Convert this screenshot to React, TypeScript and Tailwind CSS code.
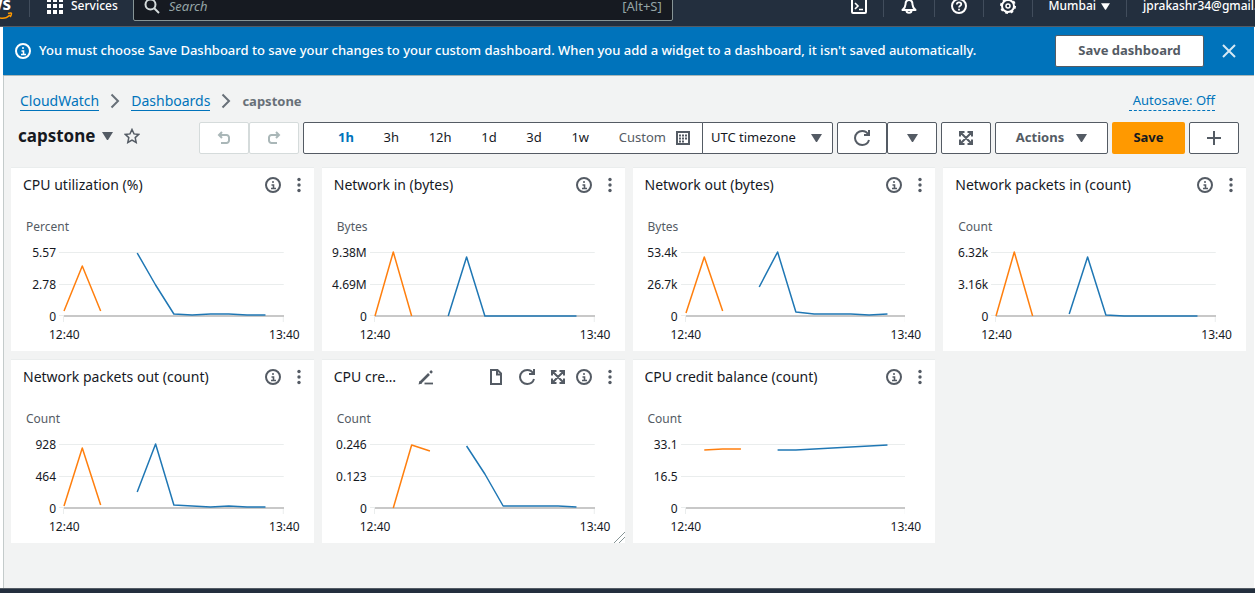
import type { ReactNode } from "react";

type Point = [step: number, y: number];

interface Widget {
  title: string;
  unit: string;
  ticks: [string, string, string];
  previous: Point[];
  current: Point[];
  active?: boolean;
}

const WIDGETS: Widget[] = [
  {
    title: "CPU utilization (%)",
    unit: "Percent",
    ticks: ["5.57", "2.78", "0"],
    previous: [[0, 61], [1, 16], [2, 61]],
    current: [[4, 3], [5, 35], [6, 64], [7, 65], [8, 64], [9, 64], [10, 65], [11, 65]],
  },
  {
    title: "Network in (bytes)",
    unit: "Bytes",
    ticks: ["9.38M", "4.69M", "0"],
    previous: [[0, 66], [1, 2], [2, 66]],
    current: [[4, 66], [5, 7], [6, 66], [11, 66]],
  },
  {
    title: "Network out (bytes)",
    unit: "Bytes",
    ticks: ["53.4k", "26.7k", "0"],
    previous: [[0, 63], [1, 7], [2, 61]],
    current: [[4, 37], [5, 2], [6, 62], [7, 64], [8, 64], [9, 64], [10, 65], [11, 64]],
  },
  {
    title: "Network packets in (count)",
    unit: "Count",
    ticks: ["6.32k", "3.16k", "0"],
    previous: [[0, 66], [1, 2], [2, 66]],
    current: [[4, 64], [5, 7], [6, 65], [7, 66], [11, 66]],
  },
  {
    title: "Network packets out (count)",
    unit: "Count",
    ticks: ["928", "464", "0"],
    previous: [[0, 64], [1, 6], [2, 63]],
    current: [[4, 50], [5, 2], [6, 63], [7, 64], [8, 65], [9, 64], [10, 65], [11, 65]],
  },
  {
    title: "CPU credit usage (count)",
    unit: "Count",
    ticks: ["0.246", "0.123", "0"],
    previous: [[1, 66], [2, 3], [3, 9]],
    current: [[5, 4], [6, 32], [7, 64], [10, 64], [11, 65]],
    active: true,
  },
  {
    title: "CPU credit balance (count)",
    unit: "Count",
    ticks: ["33.1", "16.5", "0"],
    previous: [[1, 8], [2, 7], [3, 7]],
    current: [[5, 8], [6, 8], [11, 3]],
  },
];

const RANGES = ["1h", "3h", "12h", "1d", "3d", "1w"];

function Icon({ children, className = "size-4" }: { children: ReactNode; className?: string }) {
  return (
    <svg
      viewBox="0 0 16 16"
      className={`${className} shrink-0`}
      fill="none"
      stroke="currentColor"
      strokeWidth="2"
      aria-hidden="true"
    >
      {children}
    </svg>
  );
}

const InfoIcon = () => (
  <Icon>
    <circle cx="8" cy="8" r="7" />
    <path d="M8.500 12V8H6.500M6 11.500h5M7 5h2" strokeWidth="1.600" />
  </Icon>
);

const RefreshIcon = () => (
  <Icon>
    <path d="M15 10c-.9 2.900-3.600 5-6.800 5C4.300 15 1 11.900 1 8s3.300-7 7.200-7c2.700 0 5 1.500 6.200 3.800" />
    <path d="M15 0v5h-5" />
  </Icon>
);

const ExpandIcon = () => (
  <Icon>
    <path d="M2 6.500V2h4.500M9.500 2H14v4.500M14 9.500V14H9.500M6.500 14H2V9.500M2 2l12 12M14 2L2 14" />
  </Icon>
);

const UndoIcon = ({ flip = false }: { flip?: boolean }) => (
  <Icon className={flip ? "size-4 -scale-x-100" : "size-4"}>
    <path d="M3 5h7.500A2.500 2.500 0 0 1 13 7.500v3a2.500 2.500 0 0 1-2.500 2.500H5" />
    <path d="M6 2L3 5l3 3" />
  </Icon>
);

const Caret = ({ className = "w-[11px] h-2" }: { className?: string }) => (
  <svg viewBox="0 0 11 8" className={`${className} shrink-0`} fill="currentColor" aria-hidden="true">
    <path d="M0 0h11L6 8H5z" />
  </svg>
);

const MoreIcon = () => (
  <svg viewBox="0 0 4 16" className="h-4 w-1" fill="currentColor" aria-hidden="true">
    <circle cx="2" cy="2.500" r="1.700" />
    <circle cx="2" cy="8" r="1.700" />
    <circle cx="2" cy="13.500" r="1.700" />
  </svg>
);

const FileIcon = () => (
  <Icon>
    <path d="M3 1h6.500L13 4.500V15H3z" />
    <path d="M9 1v4.500h4" />
  </Icon>
);

const PencilIcon = () => (
  <Icon>
    <path d="M2 14L11 5M12.200 3.800l1.800-1.800" strokeWidth="2.600" />
    <path d="M.5 15.500L1.500 12l2.500 2.500z" strokeWidth="0" fill="currentColor" />
    <path d="M6.500 14.500H15" strokeWidth="1.800" />
  </Icon>
);

const CalendarIcon = () => (
  <Icon>
    <path d="M2 2h12v12H2z" />
    <path d="M4 5.500h8M4 8.500h8M4 11.500h5" strokeDasharray="2 1" />
  </Icon>
);

function points(series: Point[]) {
  return series.map(([step, y]) => `${(5 + (step * 220) / 12).toFixed(1)},${y}`).join(" ");
}

function Chart({ widget }: { widget: Widget }) {
  return (
    <div className="pr-[30px]">
      <div className="flex">
        <div className="flex h-20 w-[45px] shrink-0 flex-col justify-between text-right leading-4">
          {widget.ticks.map((tick) => (
            <span key={tick}>{tick}</span>
          ))}
        </div>
        <svg
          viewBox="0 0 225 72"
          preserveAspectRatio="none"
          className="mt-[5px] ml-[3px] h-[72px] min-w-0 flex-1"
          fill="none"
          role="img"
          aria-label={widget.title}
        >
          <g stroke="#eaeded" strokeWidth="1" shapeRendering="crispEdges">
            <path d="M0 2.500H225M0 34.500H225M0 65.500H5M4.500 66V72M224.500 66V72" />
          </g>
          <path d="M5 66H225" stroke="#c8c8c8" strokeWidth="2" shapeRendering="crispEdges" />
          <g strokeWidth="1.500" strokeLinejoin="round">
            <polyline points={points(widget.previous)} stroke="#ff7f0e" />
            <polyline points={points(widget.current)} stroke="#1f77b4" />
          </g>
        </svg>
      </div>
      <div className="-mr-4 mt-[2px] ml-[38px] flex justify-between leading-4">
        <span>12:40</span>
        <span>13:40</span>
      </div>
    </div>
  );
}

function WidgetCard({ widget }: { widget: Widget }) {
  return (
    <section className="relative min-w-0 border-t border-[#eaeded] bg-white pb-2">
      <header className="flex h-[34px] items-center pr-[13px] pl-3 text-[#545b64]">
        <h2 className={`truncate text-[14px] leading-5 text-[#16191f] ${widget.active ? "w-16" : "flex-1"}`}>
          {widget.title}
        </h2>
        {widget.active && (
          <>
            <button type="button" aria-label="Rename widget" className="ml-5">
              <PencilIcon />
            </button>
            <div className="mr-[10px] ml-auto flex gap-[15px]">
              <button type="button" aria-label="View as logs">
                <FileIcon />
              </button>
              <button type="button" aria-label="Refresh widget">
                <RefreshIcon />
              </button>
              <button type="button" aria-label="Maximize widget">
                <ExpandIcon />
              </button>
            </div>
          </>
        )}
        <button type="button" aria-label="Widget info">
          <InfoIcon />
        </button>
        <button type="button" aria-label="Widget actions" className="ml-4">
          <MoreIcon />
        </button>
      </header>
      <div className="mt-[17px] text-[12px] text-[#16191f]">
        <p className="mb-[10px] pl-[15px] leading-4 text-[#545b64]">{widget.unit}</p>
        <Chart widget={widget} />
      </div>
      {widget.active && (
        <svg viewBox="0 0 12 12" className="absolute right-0 bottom-0 size-3" stroke="#879596" aria-hidden="true">
          <path d="M1 12L12 1M6 12L12 6" />
        </svg>
      )}
    </section>
  );
}

function TopNav() {
  return (
    <header className="flex h-[27px] flex-col justify-end overflow-hidden border-b border-[#545b64] bg-[#232f3e] text-[12px] leading-none font-medium text-white">
      <div className="flex h-10 shrink-0 items-center">
        <a href="#home" aria-label="AWS home" className="w-[29px] shrink-0 overflow-hidden">
          <span className="-ml-3 block h-6 text-[17px] leading-6 font-bold">ws</span>
          <svg viewBox="0 0 14 8" className="-mt-1 h-2 w-[14px]" fill="none" stroke="#f90" strokeWidth="1.500" aria-hidden="true">
            <path d="M0 6c4 1 7 0 10-3M8 1.500c2-.8 3.500-.6 3.500 0s-.3 2-1.300 3.500" />
          </svg>
        </a>
        <span className="h-[22px] w-px bg-[#414d5c]" />
        <button type="button" className="ml-[17px] flex items-center gap-2">
          <svg viewBox="0 0 16 16" className="size-4" fill="currentColor" aria-hidden="true">
            {[0, 6, 12].map((y) => [0, 6, 12].map((x) => <rect key={`${x}-${y}`} x={x} y={y} width="4" height="4" />))}
          </svg>
          Services
        </button>
        <label className="ml-[15px] flex h-[30px] w-[540px] items-center gap-[9px] rounded-xs border border-[#879596] bg-[#161a21] px-[10px] font-normal">
          <svg viewBox="0 0 16 16" className="size-4 shrink-0" fill="none" stroke="#d5dbdb" strokeWidth="2" aria-hidden="true">
            <circle cx="6.500" cy="6.500" r="5" />
            <path d="M10 10l5 5" />
          </svg>
          <input
            type="search"
            aria-label="Search"
            placeholder="Search"
            className="min-w-0 flex-1 bg-transparent text-[13px] outline-none placeholder:text-[#95a5a6] placeholder:italic"
          />
          <span className="text-[13px] leading-none text-[#95a5a6]">[Alt+S]</span>
        </label>
        <div className="ml-auto flex items-center">
          <button type="button" aria-label="CloudShell" className="pr-4">
            <Icon>
              <rect x="1" y="1" width="14" height="14" rx="1" />
              <path d="M4 5l3 3-3 3M8 11.500h4" strokeWidth="1.600" />
            </Icon>
          </button>
          <button type="button" aria-label="Notifications" className="border-l border-[#414d5c] px-[17px] py-[3px]">
            <Icon>
              <path d="M8 2C5.500 2 4.500 4 4.500 6.500 4.500 9 3 10.500 1.500 12h13c-1.500-1.500-3-3-3-5.500C11.500 4 10.500 2 8 2z" strokeLinejoin="round" />
              <path d="M5.500 12.500c0 3 5 3 5 0M8 0v2" />
            </Icon>
          </button>
          <button type="button" aria-label="Help" className="border-l border-[#414d5c] px-4 py-[3px]">
            <Icon>
              <circle cx="8" cy="8" r="7" />
              <path d="M5.800 6.500C5.800 5 6.800 4.300 8 4.300s2.300.8 2.300 2C10.300 7.800 8 7.800 8 9.500M8 10.700v1.800" strokeWidth="1.700" />
            </Icon>
          </button>
          <button type="button" aria-label="Settings" className="border-l border-[#414d5c] px-4 py-[3px]">
            <Icon>
              <circle cx="8" cy="8" r="6" />
              <circle cx="8" cy="8" r="7" strokeDasharray="2.750 2.750" />
              <circle cx="8" cy="8" r="2" strokeWidth="1.500" />
            </Icon>
          </button>
          <button type="button" className="flex h-[22px] items-center gap-[5px] border-l border-[#414d5c] px-4">
            Mumbai
            <Caret className="h-[7px] w-[9px]" />
          </button>
          <button type="button" className="h-[22px] w-[129px] overflow-hidden border-l border-[#414d5c] pl-4 text-left whitespace-nowrap">
            jprakashr34@gmail.
          </button>
        </div>
      </div>
    </header>
  );
}

const toolButton = "flex h-8 items-center justify-center rounded-xs border border-[#545b64] bg-white";
const mutedButton = "flex h-8 w-[50px] items-center justify-center rounded-xs border border-[#d5dbdb] bg-white text-[#aab7b8]";

function Toolbar() {
  return (
    <div className="mt-[11px] flex items-center pr-[15px] pl-[14px] text-[13px] text-[#545b64]">
      <div className="flex h-8 items-start gap-[7px]">
        <h1 className="text-[17px] leading-7 font-bold text-[#16191f]">capstone</h1>
        <button type="button" aria-label="Switch dashboard" className="flex h-7 items-center">
          <Caret />
        </button>
        <button type="button" aria-label="Add to favorites" className="ml-1 flex h-7 items-center">
          <Icon>
            <path
              d="M8 1.500l2 4.400 4.800.5-3.600 3.200 1 4.800L8 12l-4.200 2.400 1-4.800L1.200 6.400 6 5.900z"
              strokeWidth="1.500"
            />
          </Icon>
        </button>
      </div>
      <div className="ml-auto flex gap-1">
        <div className="flex">
          <button type="button" aria-label="Undo" disabled className={mutedButton}>
            <UndoIcon />
          </button>
          <button type="button" aria-label="Redo" disabled className={mutedButton}>
            <UndoIcon flip />
          </button>
        </div>
        <div className="flex">
          <div className="flex h-8 w-[400px] items-center justify-between rounded-l-xs border border-[#545b64] bg-white pr-[11px] pl-[34px]">
            {RANGES.map((range) => (
              <button
                key={range}
                type="button"
                className={range === "1h" ? "font-bold text-[#0073bb]" : "text-[#16191f]"}
              >
                {range}
              </button>
            ))}
            <button type="button" className="flex items-center gap-[9px]">
              Custom
              <CalendarIcon />
            </button>
          </div>
          <div className="relative -ml-px">
            <select
              aria-label="Timezone"
              className="h-8 w-[131px] appearance-none rounded-r-xs border border-[#545b64] bg-white pl-2 text-[#16191f]"
            >
              <option>UTC timezone</option>
              <option>Local timezone</option>
            </select>
            <span className="pointer-events-none absolute top-3 right-[11px]">
              <Caret />
            </span>
          </div>
        </div>
        <div className="flex">
          <button type="button" aria-label="Refresh" className={`${toolButton} w-[50px]`}>
            <RefreshIcon />
          </button>
          <button type="button" aria-label="Refresh options" className={`${toolButton} w-[50px]`}>
            <Caret />
          </button>
        </div>
        <button type="button" aria-label="Full screen" className={`${toolButton} w-[50px]`}>
          <ExpandIcon />
        </button>
        <button type="button" className={`${toolButton} w-[113px] gap-3 font-bold`}>
          Actions
          <Caret />
        </button>
        <button type="button" className="h-8 w-[73px] rounded-xs bg-[#f90] font-bold text-[#16191f]">
          Save
        </button>
        <button type="button" aria-label="Add widget" className={`${toolButton} w-[50px]`}>
          <Icon>
            <path d="M8 1v14M1 8h14" />
          </Icon>
        </button>
      </div>
    </div>
  );
}

const Chevron = () => (
  <svg viewBox="0 0 10 16" className="h-4 w-[10px]" fill="none" stroke="#687078" strokeWidth="2" aria-hidden="true">
    <path d="M1.500 1.500L8 8l-6.500 6.500" />
  </svg>
);

export default function App() {
  return (
    <div className="flex min-h-screen flex-col bg-white font-['Noto_Sans',sans-serif]">
      <TopNav />
      <main className="mr-px ml-[3px] flex flex-1 flex-col border-l border-[#c4cbcb] bg-[#f2f3f3]">
        <div
          role="status"
          className="-ml-px flex h-[49px] items-center border-b border-[#aab7b8] bg-[#0073bb] pr-[17px] pl-3 text-[13px] text-white"
        >
          <InfoIcon />
          <p className="ml-2 flex-1 font-medium whitespace-nowrap">
            You must choose Save Dashboard to save your changes to your custom dashboard. When you add a widget to a
            dashboard, it isn't saved automatically.
          </p>
          <button type="button" className="h-8 w-[149px] rounded-xs border border-[#545b64] bg-white font-bold text-[#545b64]">
            Save dashboard
          </button>
          <button type="button" aria-label="Dismiss" className="ml-[17px] text-[#d5e8f4]">
            <Icon>
              <path d="M2 2l12 12M14 2L2 14" />
            </Icon>
          </button>
        </div>
        <div className="mt-[15px] flex items-center justify-between pr-[39px] pl-4 text-[14px]">
          <nav aria-label="Breadcrumb" className="flex items-center gap-[11px] leading-[18px] text-[#0073bb]">
            <a href="#cloudwatch" className="border-b border-current">
              CloudWatch
            </a>
            <Chevron />
            <a href="#dashboards" className="border-b border-current">
              Dashboards
            </a>
            <Chevron />
            <span className="text-[13px] font-bold text-[#687078]">capstone</span>
          </nav>
          <button type="button" className="border-b border-dashed border-current pl-1 text-[13px] leading-[19px] text-[#0073bb]">
            Autosave: Off
          </button>
        </div>
        <Toolbar />
        <div className="mt-[13px] grid grid-cols-4 gap-2 pr-2 pb-6 pl-[7px]">
          {WIDGETS.map((widget) => (
            <WidgetCard key={widget.title} widget={widget} />
          ))}
        </div>
      </main>
      <footer className="h-[5px] border-t border-[#545b64] bg-[#232f3e]" />
    </div>
  );
}
